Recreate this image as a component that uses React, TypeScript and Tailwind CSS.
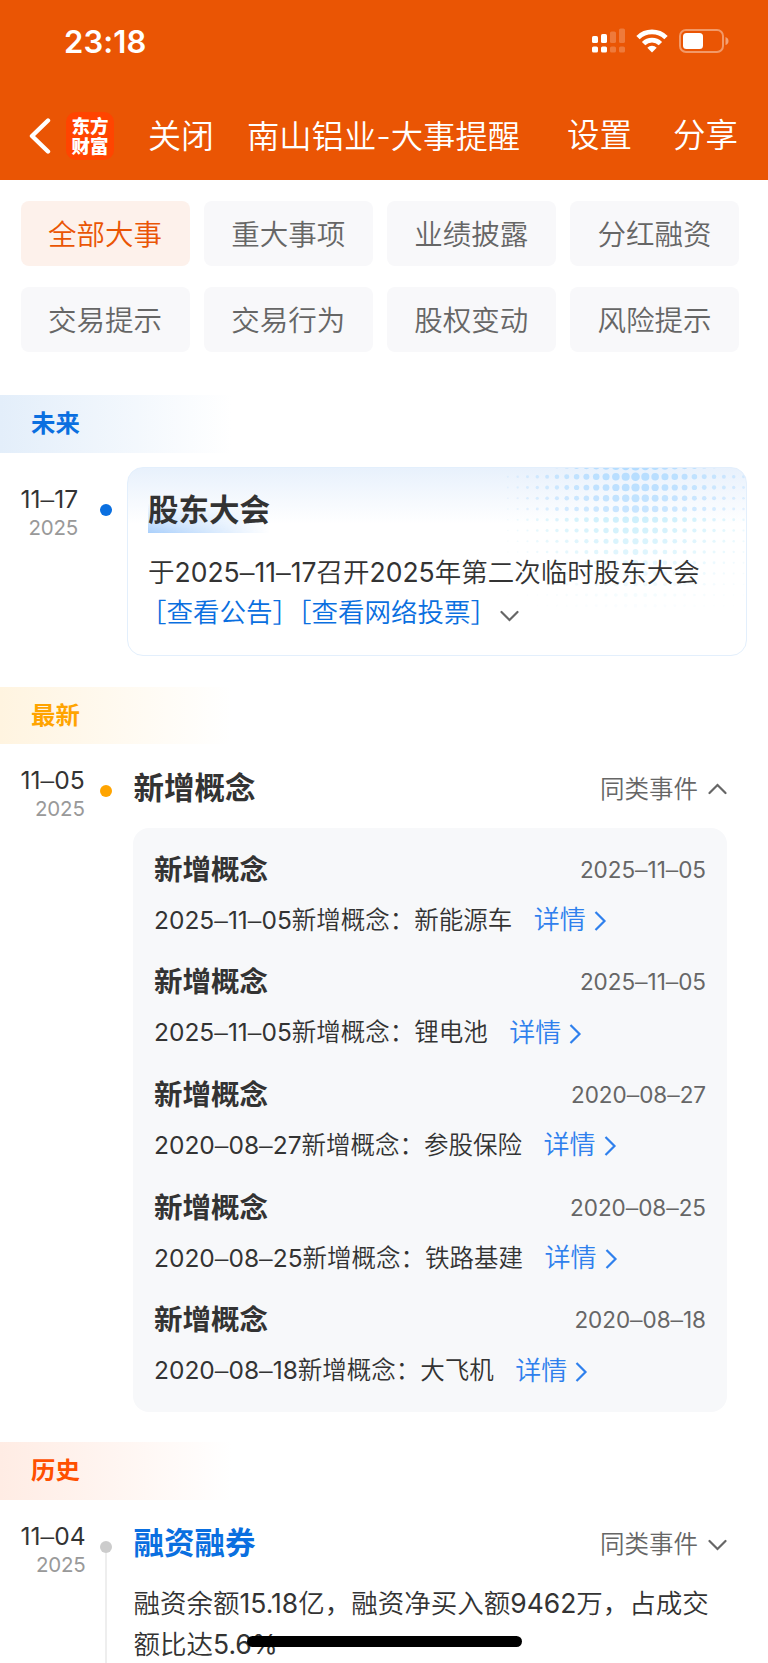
import { ReactNode } from "react";
import { clsx } from "clsx";

const FILTERS = [
    "全部大事",
    "重大事项",
    "业绩披露",
    "分红融资",
    "交易提示",
    "交易行为",
    "股权变动",
    "风险提示",
];

const CONCEPTS = [
    { date: "2025–11–05", name: "新能源车" },
    { date: "2025–11–05", name: "锂电池" },
    { date: "2020–08–27", name: "参股保险" },
    { date: "2020–08–25", name: "铁路基建" },
    { date: "2020–08–18", name: "大飞机" },
];

function StatusBar() {
    return (
        <div className="flex h-[82px] items-center justify-between pl-[64px] pr-[38px]">
            <span className="text-[31px] font-semibold leading-none tracking-[0.1px]">23:18</span>
            <div className="flex items-center">
                <svg width="34" height="26" viewBox="0 0 34 26" fill="#fff">
                    <rect x="0" y="8" width="6" height="7" rx="1.6" />
                    <rect x="9" y="6" width="6" height="9" rx="1.6" />
                    <rect x="18" y="3.500" width="6" height="11.500" rx="1.6" opacity="0.22" />
                    <rect x="27" y="0.500" width="6" height="14.500" rx="1.6" opacity="0.22" />
                    <rect x="0" y="18.500" width="6" height="6" rx="1.6" />
                    <rect x="9" y="18.500" width="6" height="6" rx="1.6" />
                    <rect x="18" y="18.500" width="6" height="6" rx="1.6" opacity="0.22" />
                    <rect x="27" y="18.500" width="6" height="6" rx="1.6" opacity="0.22" />
                </svg>
                <svg className="ml-[10px]" width="32" height="24" viewBox="0 0 32 24" fill="none" stroke="#fff" strokeWidth="4.8">
                    <path d="M2 8.600 A20 20 0 0 1 30 8.600" />
                    <path d="M7.600 14.600 A12 12 0 0 1 24.400 14.600" />
                    <path d="M16 23.500 L11.300 18.800 A6.600 6.600 0 0 1 20.700 18.800 Z" fill="#fff" stroke="none" />
                </svg>
                <svg className="ml-[11px]" width="51" height="24" viewBox="0 0 51 24">
                    <rect x="1" y="1" width="43" height="22" rx="6" fill="none" stroke="#fff" strokeOpacity="0.4" strokeWidth="2" />
                    <rect x="4" y="4" width="20" height="16" rx="3.500" fill="#fff" />
                    <path d="M46.500 8 Q49.500 9 49.500 12 Q49.500 15 46.500 16 Z" fill="#fff" fillOpacity="0.45" />
                </svg>
            </div>
        </div>
    );
}

function NavBar() {
    return (
        <div className="flex h-[98px] items-center pt-[10px] text-[33px] leading-none">
            <svg className="ml-[29px]" width="22" height="36" viewBox="0 0 22 36" fill="none" stroke="#fff" strokeWidth="4.400" strokeLinecap="round" strokeLinejoin="round">
                <path d="M19 2.500 L3 18 L19 33.500" />
            </svg>
            <div className="ml-[15px] flex size-[48px] flex-col items-center justify-center rounded-[10px] bg-[#ff4400] text-[18.500px] font-black leading-[20px]">
                <span>东方</span>
                <span>财富</span>
            </div>
            <span className="ml-[34px]">关闭</span>
            <span className="ml-[33px] mt-[2px] text-[32.300px]">南山铝业-大事提醒</span>
            <span className="ml-auto text-[32.500px]">设置</span>
            <span className="ml-[41px] mr-[30px] text-[32.500px]">分享</span>
        </div>
    );
}

function SectionLabel({ className, children }: { className: string; children: ReactNode }) {
    return (
        <div className={clsx("flex h-[57.500px] w-[232px] items-center bg-linear-to-r to-white pl-[31px] text-[24.400px] font-semibold", className)}>
            {children}
        </div>
    );
}

// Dates are set with a longer dash than the digit font has
function DateText({ value }: { value: string }) {
    return (
        <span className="font-normal">
            {value.split("–").map((part, i) => (
                <span key={i}>
                    {i > 0 && <span className="align-[0.04em] font-['Liberation_Sans'] leading-none">–</span>}
                    {part}
                </span>
            ))}
        </span>
    );
}

function DateTag({ day, dot }: { day: string; dot: string }) {
    return (
        <>
            <div className="-ml-[0.500px] w-max text-right">
                <div className="text-[24.600px] leading-[32px] text-[#333333]"><DateText value={day} /></div>
                <div className="pt-[1px] text-[20.500px] font-normal leading-[24px] tracking-[-0.2px] text-[#999999]">2025</div>
            </div>
            <div className={clsx("absolute left-[100px] size-[12px] rounded-full", dot)} />
        </>
    );
}

function Chevron({ up = false }: { up?: boolean }) {
    return (
        <svg width="19" height="12" viewBox="0 0 19 12" fill="none" stroke="#666" strokeWidth="2.200" strokeLinecap="round">
            <path d={up ? "M1.500 10 L9.500 2 L17.500 10" : "M1.500 2 L9.500 10 L17.500 2"} />
        </svg>
    );
}

function SimilarEvents({ up }: { up?: boolean }) {
    return (
        <div className="mt-[3px] flex items-center gap-[10px] text-[24.500px] text-[#666666]">
            同类事件
            <Chevron up={up} />
        </div>
    );
}

// Halftone pattern in the card corner, strongest near the top centre
function Halftone() {
    const dots = [];
    for (let row = 0; row < 14; row++) {
        for (let col = -13; col <= 12; col++) {
            const dist = Math.abs(col) / 13;
            const r = 4.500 * (1 - dist * 0.78) * (1 - row * 0.045);
            const opacity = (1 - dist * dist * 0.75) * (1 - row / 14);
            dots.push(
                <circle
                    key={`${row}_${col}`}
                    cx={138.500 + col * 9.820}
                    cy={row * 10.750 - 2}
                    r={Math.max(r, 0.6)}
                    fill={row < 5 ? "#b3dcff" : "#b4e8fa"}
                    opacity={opacity}
                />
            );
        }
    }
    return (
        <svg className="absolute right-0 top-0" width="249" height="150" viewBox="0 0 249 150">
            {dots}
        </svg>
    );
}

function MeetingCard() {
    return (
        <div className="relative h-[189px] w-[620px] overflow-hidden rounded-[16px] border border-[#e3effc] bg-linear-to-b from-[#e8f1fc] to-white to-30% pl-[20px] pt-[22px]">
            <Halftone />
            <div className="relative">
                <div className="relative h-[43px] w-max text-[30.500px] font-semibold leading-[39px] text-[#333333]">
                    <div className="absolute inset-x-0 bottom-0 h-[40px] bg-linear-to-t from-[#a9cffb] to-transparent to-75% mask-[linear-gradient(to_right,black,transparent)]" />
                    <span className="relative">股东大会</span>
                </div>
                <div className="mt-[19px] whitespace-nowrap text-[26.500px] leading-[41px] text-[#333333]">
                    <div className="h-[41px]">于<DateText value="2025–11–17" />召开<span className="font-normal">2025</span>年第二次临时股东大会</div>
                    <div className="-mt-[1px] flex items-center text-[#0a6fe0]">
                        <span className="-ml-[8px] -mr-[7px]">［查看公告］</span>
                        <span className="-mx-[7px]">［查看网络投票］</span>
                        <span className="ml-[10px] flex pt-[8px]"><Chevron /></span>
                    </div>
                </div>
            </div>
        </div>
    );
}

function ConceptItem({ date, name }: { date: string; name: string }) {
    return (
        <div className="h-[112.700px]">
            <div className="flex h-[50px] items-center justify-between">
                <span className="mt-[2px] text-[28.500px] font-semibold text-[#333333]">新增概念</span>
                <span className="mt-[1px] text-[22.500px] tracking-[-0.050px] text-[#666666]"><DateText value={date} /></span>
            </div>
            <div className="flex h-[52px] items-center whitespace-nowrap text-[24.500px] text-[#333333]">
                <span><DateText value={date} />新增概念：{name}</span>
                <span className="-mt-[1px] ml-[21.500px] text-[26px] text-[#2f80ed]">详情</span>
                <svg className="ml-[8px] mt-[2px]" width="13" height="20" viewBox="0 0 13 20" fill="none" stroke="#2f80ed" strokeWidth="2.200">
                    <path d="M1.500 1 L10.500 10 L1.500 19" />
                </svg>
            </div>
        </div>
    );
}

export default function App() {
    return (
        <div className="relative h-[1663px] w-[768px] overflow-hidden bg-white font-['Inter','Noto_Sans_CJK_SC',sans-serif] font-[350]">
            <header className="h-[180px] bg-[#ea5504] text-white">
                <StatusBar />
                <NavBar />
            </header>

            <div className="grid grid-cols-4 gap-x-[14px] gap-y-[21px] pl-[20.500px] pr-[29px] pt-[21px]">
                {FILTERS.map((label, i) => (
                    <div
                        key={label}
                        className={clsx(
                            "flex h-[65px] items-center justify-center rounded-[8px] pt-[3px] text-[28.500px]",
                            i === 0 ? "bg-[#fdf1eb] text-[#ea5504]" : "bg-[#f8f8fa] text-[#666666]"
                        )}
                    >
                        {label}
                    </div>
                ))}
            </div>

            <SectionLabel className="mt-[43px] from-[#e3eefa] text-[#0a6fe0]">未来</SectionLabel>
            <div className="relative mt-[14px] flex h-[189px] justify-between pl-[21px] pr-[21px]">
                <div className="pt-[16px]">
                    <DateTag day="11–17" dot="top-[37px] bg-[#0a6fe0]" />
                </div>
                <MeetingCard />
            </div>

            <SectionLabel className="mt-[31px] from-[#fff4e0] text-[#ffa400]">最新</SectionLabel>
            <div className="relative mt-[20px] flex h-[64px] justify-between pl-[21px] pr-[41px]">
                <DateTag day="11–05" dot="top-[21px] bg-[#ffa400]" />
                <div className="flex h-[47px] w-[593.500px] items-center justify-between">
                    <span className="text-[30.500px] font-semibold text-[#333333]">新增概念</span>
                    <SimilarEvents up />
                </div>
            </div>
            <div className="ml-[133px] h-[583.500px] w-[594px] rounded-[16px] bg-[#f7f8fa] px-[21px] pt-[16px]">
                {CONCEPTS.map((item, i) => (
                    <ConceptItem key={i} {...item} />
                ))}
            </div>

            <SectionLabel className="mt-[30.500px] from-[#ffece4] text-[#ff5000]">历史</SectionLabel>
            <div className="relative mt-[20px] flex h-[144px] justify-between pl-[21px] pr-[41px]">
                <div className="absolute left-[105px] top-[26px] h-[140px] w-[2px] bg-[#eeeeee]" />
                <DateTag day="11–04" dot="top-[21px] bg-[#cccccc]" />
                <div className="w-[593.500px]">
                    <div className="flex h-[47px] items-center justify-between">
                        <span className="text-[30.500px] font-semibold text-[#0a6fe0]">融资融券</span>
                        <SimilarEvents />
                    </div>
                    <div className="mt-[16px] whitespace-nowrap text-[26.500px] leading-[41px] text-[#333333]">
                        <div>
                            融资余额<span className="font-normal">15.18</span>亿，融资净买入额<span className="font-normal">9462</span>万，占成交
                        </div>
                        <div>额比达<span className="font-normal">5.6%</span></div>
                    </div>
                </div>
            </div>

            <div className="absolute left-[247px] top-[1636px] h-[10.500px] w-[274.500px] rounded-full bg-black" />
        </div>
    );
}
